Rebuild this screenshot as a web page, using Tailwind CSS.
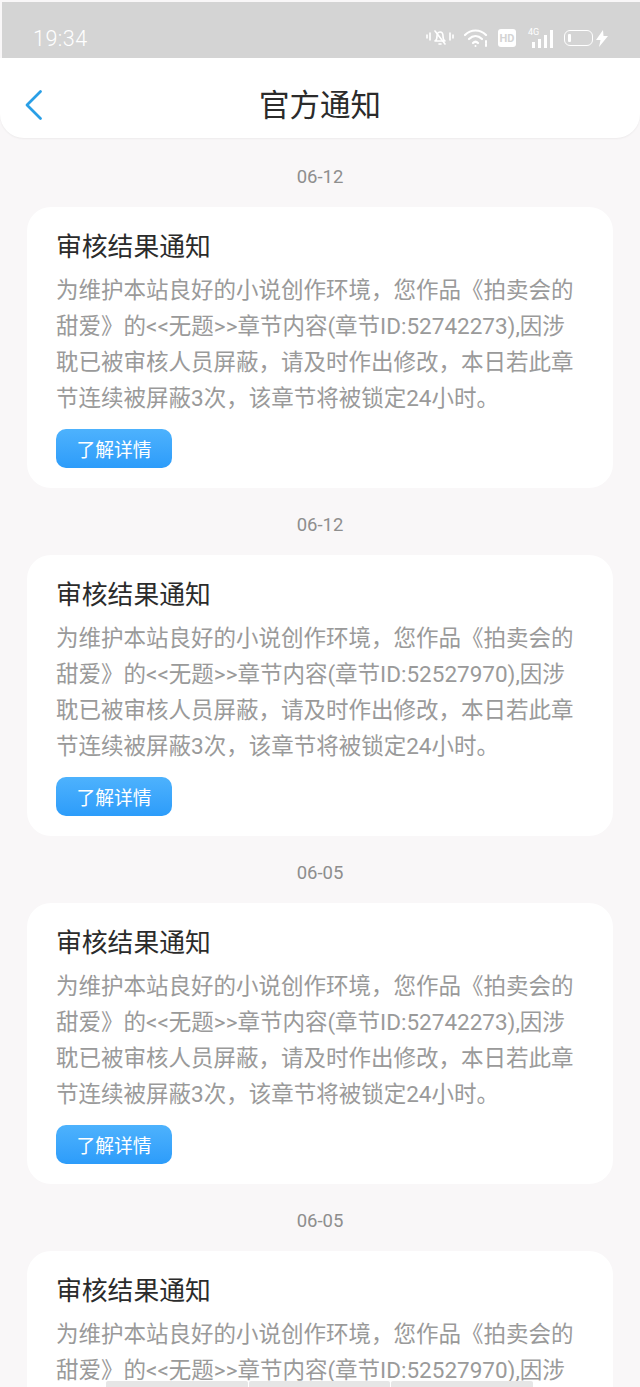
<!DOCTYPE html>
<html lang="zh">
<head>
  <meta charset="UTF-8"/>
  <title>官方通知</title>
  <script src="https://cdn.jsdelivr.net/npm/@tailwindcss/browser@4"></script>
</head>
<body class="bg-[#f9f7f8] font-['Roboto','Noto_Sans_CJK_SC',sans-serif]">
<div class="relative h-[1387px] w-[640px] overflow-hidden">

  <!-- status bar -->
  <div class="mt-[2px] ml-[2px] flex h-[56px] items-center justify-between bg-[#d4d4d4] pr-[32px] pl-[31px] pt-[18px] text-white">
    <span class="text-[21.500px] tracking-[0.5px] font-light">19:34</span>
    <div class="-mt-[2px] flex items-center">
      <svg width="28" height="20" viewBox="0 0 28 20" fill="none" stroke="white" stroke-width="1.6" stroke-linecap="round" stroke-linejoin="round"><path d="M9 13c2-1 2-3 2-5s1-4 3-4 3 2 3 4 0 4 2 5z"/><path d="M9 3l10 13"/><path d="M13 16h2"/><path d="M1 7v3M4 5v7M24 5v7M27 7v3"/></svg>
      <svg class="ml-[10px]" width="26" height="20" viewBox="0 0 26 20" fill="none" stroke="white" stroke-width="2.2" stroke-linecap="round"><path d="M1 7c6-6 15-6 21 0"/><path d="M5 11c4-4 9-4 13 0"/><path d="M9 15c1.500-1.500 3.500-1.500 5 0"/><circle cx="11.500" cy="18" r="1" fill="white" stroke="none"/><path d="M22 13v5" stroke-width="2" stroke-dasharray="2 1"/></svg>
      <div class="ml-[8px] flex h-[18px] w-[18px] items-center justify-center rounded-[3px] bg-white text-[11px] leading-none font-bold text-[#d4d4d4]">HD</div>
      <div class="relative ml-[12px] h-[20px] w-[25px]">
        <span class="absolute -top-[1px] left-0 text-[9px] leading-[10px] text-white">4G</span>
        <div class="absolute right-0 bottom-0 flex items-end gap-[3px]">
          <i class="block h-[6px] w-[3px] bg-white"></i><i class="block h-[9px] w-[3px] bg-white"></i><i class="block h-[13px] w-[3px] bg-white"></i><i class="block h-[18px] w-[3px] bg-white"></i>
        </div>
      </div>
      <div class="ml-[11px] flex h-[16px] w-[29px] items-center rounded-[6px] border-[1.5px] border-white pl-[3px]"><i class="block h-[8px] w-[3px] rounded-[1px] bg-white"></i></div>
      <svg class="ml-[3px]" width="12" height="17" viewBox="0 0 12 17" fill="white"><path d="M7 0L0 10h4.500L3 17l9-11H7.500z"/></svg>
    </div>
  </div>

  <!-- header -->
  <header class="relative flex h-[80px] items-center justify-center rounded-b-[24px] bg-white pt-[16px] shadow-[0_1px_2px_rgba(0,0,0,0.05)]">
    <svg class="absolute top-[31px] left-[25px]" width="18" height="32" viewBox="0 0 18 32" fill="none" stroke="#2a9fe6" stroke-width="2.800" stroke-linecap="round" stroke-linejoin="round"><path d="M15.500 2.500L2 16l13.500 13.500"/></svg>
    <h1 class="text-[30.500px] leading-none text-[#2b2b2b]">官方通知</h1>
  </header>

  <!-- list -->
  <main class="flex flex-col px-[27px] pt-[28px]">

    <section>
      <p class="h-[41px] text-center text-[18.500px] leading-[22px] text-[#8e8e8e]">06-12</p>
      <div class="h-[281px] rounded-[24px] bg-white pt-[22px] pl-[29px]">
        <h2 class="text-[25.800px] leading-[36px] text-[#2b2b2b]">审核结果通知</h2>
        <p class="mt-[7px] text-[22.500px] leading-[36px] whitespace-nowrap text-[#9a9a9a]">为维护本站良好的小说创作环境，您作品《拍卖会的<br/>甜爱》的&lt;&lt;无题&gt;&gt;章节内容(章节ID:52742273),因涉<br/>耽已被审核人员屏蔽，请及时作出修改，本日若此章<br/>节连续被屏蔽3次，该章节将被锁定24小时。</p>
        <button class="mt-[13px] h-[39px] w-[116px] rounded-[10px] bg-gradient-to-b from-[#4db2fd] to-[#2c9cfa] pt-[5px] text-[18.800px] text-white">了解详情</button>
      </div>
    </section>

    <section class="mt-[26px]">
      <p class="h-[41px] text-center text-[18.500px] leading-[22px] text-[#8e8e8e]">06-12</p>
      <div class="h-[281px] rounded-[24px] bg-white pt-[22px] pl-[29px]">
        <h2 class="text-[25.800px] leading-[36px] text-[#2b2b2b]">审核结果通知</h2>
        <p class="mt-[7px] text-[22.500px] leading-[36px] whitespace-nowrap text-[#9a9a9a]">为维护本站良好的小说创作环境，您作品《拍卖会的<br/>甜爱》的&lt;&lt;无题&gt;&gt;章节内容(章节ID:52527970),因涉<br/>耽已被审核人员屏蔽，请及时作出修改，本日若此章<br/>节连续被屏蔽3次，该章节将被锁定24小时。</p>
        <button class="mt-[13px] h-[39px] w-[116px] rounded-[10px] bg-gradient-to-b from-[#4db2fd] to-[#2c9cfa] pt-[5px] text-[18.800px] text-white">了解详情</button>
      </div>
    </section>

    <section class="mt-[26px]">
      <p class="h-[41px] text-center text-[18.500px] leading-[22px] text-[#8e8e8e]">06-05</p>
      <div class="h-[281px] rounded-[24px] bg-white pt-[22px] pl-[29px]">
        <h2 class="text-[25.800px] leading-[36px] text-[#2b2b2b]">审核结果通知</h2>
        <p class="mt-[7px] text-[22.500px] leading-[36px] whitespace-nowrap text-[#9a9a9a]">为维护本站良好的小说创作环境，您作品《拍卖会的<br/>甜爱》的&lt;&lt;无题&gt;&gt;章节内容(章节ID:52742273),因涉<br/>耽已被审核人员屏蔽，请及时作出修改，本日若此章<br/>节连续被屏蔽3次，该章节将被锁定24小时。</p>
        <button class="mt-[13px] h-[39px] w-[116px] rounded-[10px] bg-gradient-to-b from-[#4db2fd] to-[#2c9cfa] pt-[5px] text-[18.800px] text-white">了解详情</button>
      </div>
    </section>

    <section class="mt-[26px]">
      <p class="h-[41px] text-center text-[18.500px] leading-[22px] text-[#8e8e8e]">06-05</p>
      <div class="h-[281px] rounded-[24px] bg-white pt-[22px] pl-[29px]">
        <h2 class="text-[25.800px] leading-[36px] text-[#2b2b2b]">审核结果通知</h2>
        <p class="mt-[7px] text-[22.500px] leading-[36px] whitespace-nowrap text-[#9a9a9a]">为维护本站良好的小说创作环境，您作品《拍卖会的<br/>甜爱》的&lt;&lt;无题&gt;&gt;章节内容(章节ID:52527970),因涉<br/>耽已被审核人员屏蔽，请及时作出修改，本日若此章<br/>节连续被屏蔽3次，该章节将被锁定24小时。</p>
      </div>
    </section>
  </main>

  <!-- bottom overlay bars -->
  <div class="absolute bottom-0 left-[106px] flex h-[6px] gap-[1px]">
    <i class="block w-[142px] rounded-t-[2px] bg-[#e6e6e6]"></i>
    <i class="block w-[141px] rounded-t-[2px] bg-[#e6e6e6]"></i>
    <i class="block w-[142px] rounded-t-[2px] bg-[#e6e6e6]"></i>
  </div>
</div>
</body>
</html>
